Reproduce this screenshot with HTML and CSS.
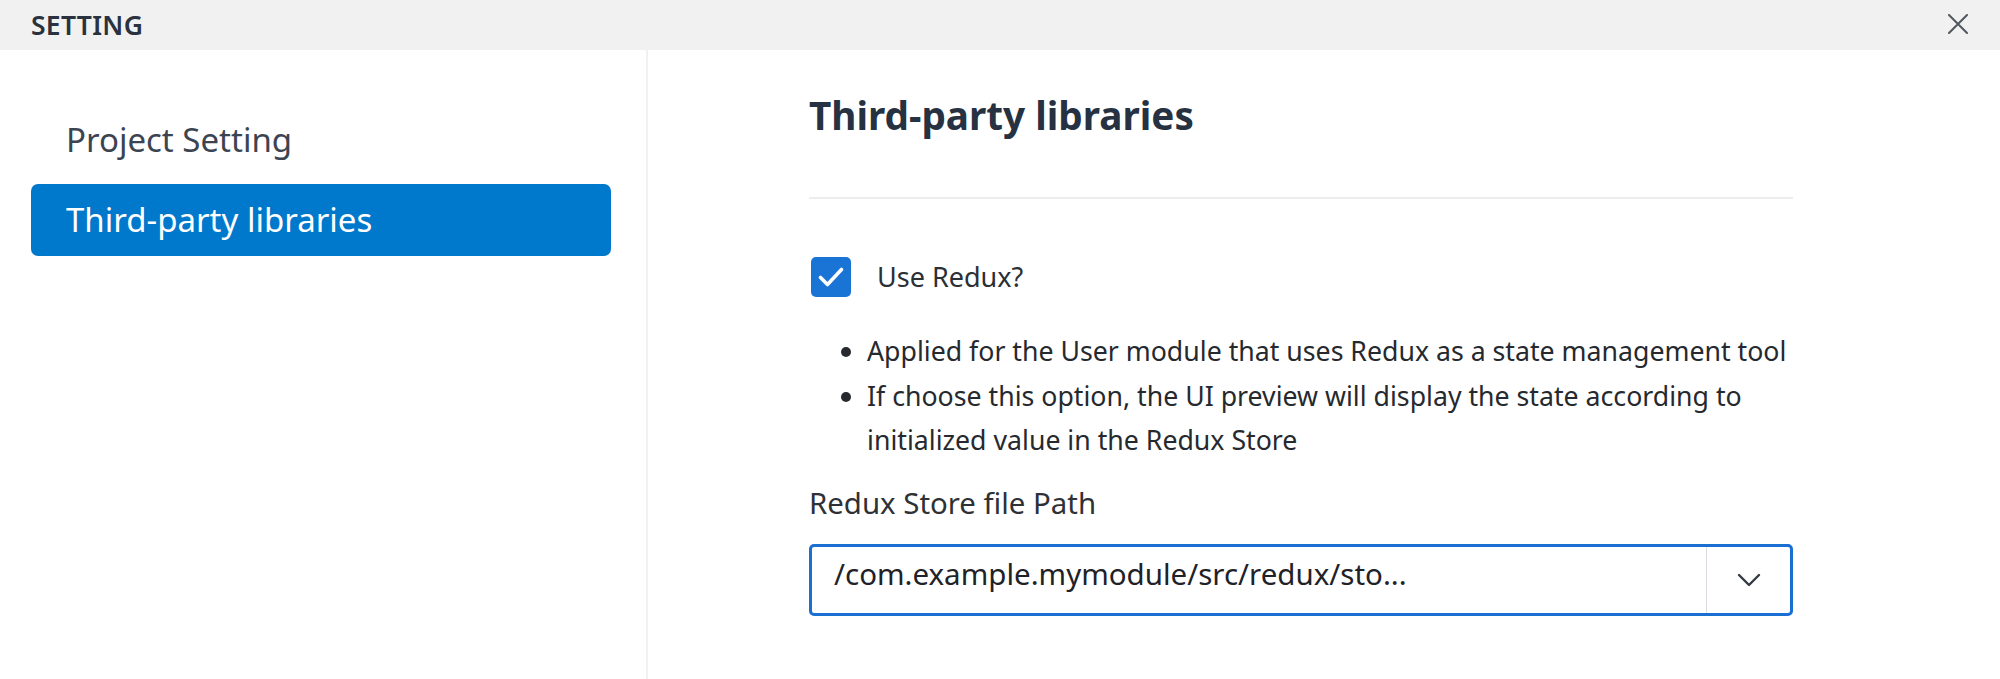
FILE: index.html
```html
<!DOCTYPE html>
<html lang="en">
<head>
<meta charset="utf-8">
<title>Setting</title>
<link rel="stylesheet" href="styles.css">
</head>
<body>
<div class="dialog">
  <header class="titlebar">
    <span class="title">SETTING</span>
    <button class="close" aria-label="Close">
      <svg width="20" height="20" viewBox="0 0 20 20"><path d="M1 1 L19 19 M19 1 L1 19" stroke="#51565f" stroke-width="2" stroke-linecap="round" fill="none"/></svg>
    </button>
  </header>
  <div class="body">
    <nav class="sidebar">
      <div class="nav-item">Project Setting</div>
      <div class="nav-item active">Third-party libraries</div>
    </nav>
    <main class="content">
      <h1 class="heading">Third-party libraries</h1>
      <div class="rule"></div>
      <label class="check-row">
        <span class="checkbox">
          <svg width="40" height="40" viewBox="0 0 40 40"><polyline points="9.5,20.5 16.5,27.5 30.5,12.5" fill="none" stroke="#fff" stroke-width="3.6" stroke-linecap="round" stroke-linejoin="round"/></svg>
        </span>
        <span class="check-label">Use Redux?</span>
      </label>
      <ul class="notes">
        <li>Applied for the User module that uses Redux as a state management tool</li>
        <li>If choose this option, the UI preview will display the state according to initialized value in the Redux Store</li>
      </ul>
      <div class="field-label">Redux Store file Path</div>
      <div class="select">
        <div class="select-value">/com.example.mymodule/src/redux/sto...</div>
        <div class="select-toggle">
          <svg width="24" height="16" viewBox="0 0 24 16"><polyline points="2,3 12,13 22,3" fill="none" stroke="#343a43" stroke-width="2.4" stroke-linecap="round" stroke-linejoin="round"/></svg>
        </div>
      </div>
    </main>
  </div>
</div>
</body>
</html>
```
FILE: styles.css
```css
* { box-sizing: border-box; }
html, body { margin: 0; padding: 0; background: #fff; }
body {
  font-family: "Noto Sans", "Open Sans", sans-serif;
  width: 2000px;
  height: 679px;
  overflow: hidden;
}
.dialog { display: flex; flex-direction: column; height: 679px; }
.titlebar {
  height: 50px;
  background: #f1f1f1;
  display: flex;
  align-items: center;
  justify-content: space-between;
  padding: 0 32px 0 31px;
  flex: none;
}
.title {
  font-size: 26.5px;
  font-weight: 600;
  color: #2a3240;
  letter-spacing: 0.3px;
}
.close {
  border: 0;
  background: transparent;
  padding: 0;
  width: 20px;
  height: 20px;
  display: flex;
  margin-top: -3px;
}
.body { display: flex; flex: 1; }
.sidebar {
  width: 648px;
  border-right: 2px solid #f1f1f1;
  padding: 54px 35px 0 31px;
  display: flex;
  flex-direction: column;
  gap: 8px;
  flex: none;
}
.nav-item {
  height: 72px;
  line-height: 72px;
  padding-left: 35px;
  font-size: 33px;
  color: #3c4452;
  border-radius: 7px;
  white-space: nowrap;
}
.nav-item.active {
  background: #0078cc;
  color: #fff;
}
.content {
  flex: none;
  width: 1145px;
  padding: 36px 0 0 161px;
}
.heading {
  margin: 0;
  font-size: 38.7px;
  line-height: 58px;
  font-weight: 700;
  color: #263142;
}
.rule {
  height: 2px;
  background: #ededed;
  margin-top: 53px;
}
.check-row {
  display: flex;
  align-items: center;
  gap: 26px;
  margin-top: 58px;
  height: 40px;
}
.checkbox {
  width: 40px;
  height: 40px;
  margin-left: 2px;
  border-radius: 5px;
  background: #1a74d5;
  display: flex;
}
.check-label {
  font-size: 27px;
  color: #2b2f36;
  margin-top: -2px;
}
.notes {
  margin: 32px 0 0 0;
  padding-left: 58px;
  font-size: 26.7px;
  line-height: 44.6px;
  color: #26292e;
}
.field-label {
  margin-top: 21px;
  font-size: 29.4px;
  line-height: 38px;
  color: #2e3136;
}
.select {
  margin-top: 22px;
  height: 72px;
  border: 3px solid #1a70d2;
  border-radius: 5px;
  display: flex;
}
.select-value {
  flex: 1;
  padding: 7px 0 0 22px;
  font-size: 29.5px;
  line-height: 40px;
  color: #1f2227;
  white-space: nowrap;
  overflow: hidden;
}
.select-toggle {
  width: 84px;
  border-left: 1px solid #d9dde3;
  display: flex;
  align-items: center;
  justify-content: center;
}
```
